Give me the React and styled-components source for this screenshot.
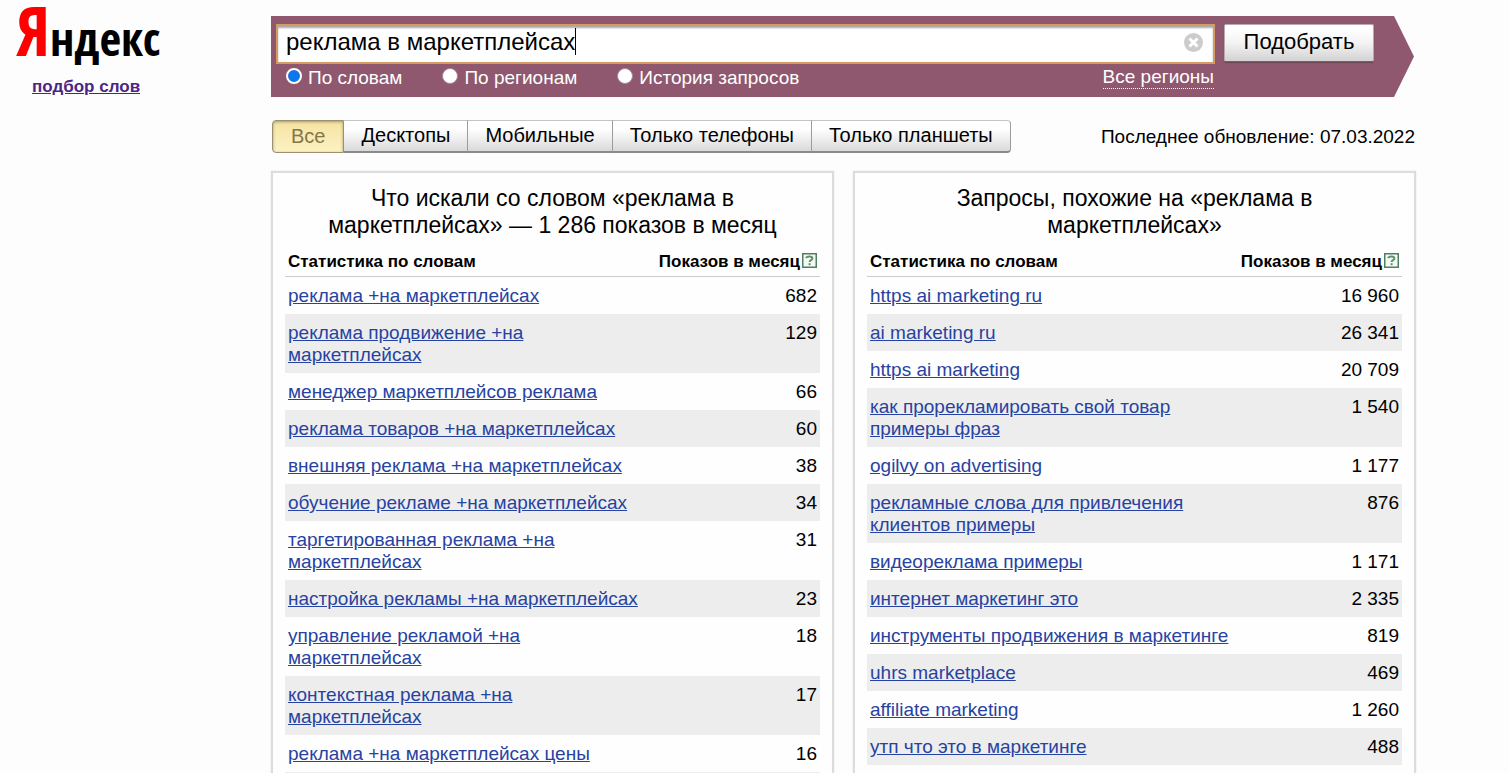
import { useState } from "react";
import styled, { createGlobalStyle } from "styled-components";

const GlobalStyle = createGlobalStyle`
  * {
    box-sizing: border-box;
  }
  body {
    margin: 0;
    background-color: #fdfdfd;
    color: #000000;
    font-family: "Liberation Sans", Arial, sans-serif;
    font-size: 19px;
    line-height: 22px;
  }
  input,
  button {
    font-family: inherit;
  }
`;

const Page = styled.div`
  display: grid;
  grid-template-columns: 271px minmax(0, 1fr);
  padding-right: 93px;
  height: 100vh;
  overflow: hidden;
`;

const Sidebar = styled.aside`
  display: flex;
  flex-direction: column;
  align-items: flex-start;
  padding-left: 16px;
`;

const Logo = styled.a`
  font-family: "Open Sans Condensed", "DejaVu Sans Condensed", "Liberation Sans", sans-serif;
  font-size: 47px;
  line-height: 60px;
  color: #000000;
  text-decoration: none;
`;

const LogoInitial = styled.span`
  font-size: 68px;
  color: #ff0000;
`;

const ServiceLink = styled.a`
  margin: 8px 0 0 16px;
  font-size: 17px;
  font-weight: bold;
  color: #4b2585;
`;

const Main = styled.main`
  padding-top: 16px;
`;

const SearchForm = styled.form`
  display: grid;
  grid-template-columns: minmax(0, 1fr) 150px;
  column-gap: 9px;
  align-items: start;
  height: 81px;
  margin-right: 2px;
  padding: 8px 40px 0 5px;
  background-color: #8f586f;
  clip-path: polygon(0 0, calc(100% - 20px) 0, 100% 50%, calc(100% - 20px) 100%, 0 100%);
`;

const InputBox = styled.div`
  position: relative;
`;

const SearchInput = styled.input`
  display: block;
  width: 100%;
  height: 40px;
  padding: 0 44px 4px 8px;
  border: 2px solid #d49c62;
  border-radius: 0;
  background-color: #ffffff;
  box-shadow: inset 0 2px 2px #aaaaaa;
  font-size: 24px;
  color: #000000;
  outline: none;
`;

const Caret = styled.span`
  position: absolute;
  top: 4px;
  left: 299px;
  width: 1px;
  height: 27px;
  background-color: #000000;
`;

const ClearButton = styled.button`
  position: absolute;
  top: 9px;
  right: 12px;
  width: 19px;
  height: 19px;
  padding: 0;
  border: 0;
  background: none;
  svg {
    display: block;
  }
`;

const SubmitButton = styled.button`
  height: 38px;
  padding: 0 0 2px;
  border: 1px solid #b9a9b1;
  border-bottom-color: #77606b;
  border-radius: 2px;
  background: linear-gradient(#ffffff 10%, #f3f3f3 50%, #d2d2d2);
  box-shadow: 0 1px 1px #6b4556;
  font-size: 22px;
  color: #000000;
`;

const Options = styled.div`
  display: flex;
  align-items: center;
  gap: 40px;
  padding: 2px 1px 0 10px;
  color: #ffffff;
`;

const Option = styled.label`
  display: flex;
  align-items: center;
  gap: 6px;
`;

const Radio = styled.input`
  appearance: none;
  width: 16px;
  height: 16px;
  margin: 0 0 4px;
  border: 1px solid #aa8c99;
  border-radius: 50%;
  background-color: #ffffff;
  &:checked {
    border: 2px solid #ffffff;
    background-color: #0b78ee;
    background-clip: padding-box;
  }
`;

const RegionsLink = styled.a`
  margin-left: auto;
  border-bottom: 1px dotted #ffffff;
  color: #ffffff;
  line-height: 22px;
  text-decoration: none;
`;

const Toolbar = styled.div`
  display: flex;
  justify-content: space-between;
  align-items: center;
  margin-top: 23px;
  padding: 0 1px;
`;

const Tabs = styled.div`
  display: flex;
`;

const Tab = styled.button`
  height: 33px;
  padding: 0 17px 2px;
  border: 1px solid #c4c4c4;
  border-left-width: 0;
  border-right-color: #9c9c9c;
  border-bottom: 2px solid #8a8a8a;
  background: linear-gradient(#ffffff 25%, #f1f1f1 55%, #d9d9d9);
  font-size: 20px;
  color: #000000;
  &:last-child {
    border-radius: 0 4px 4px 0;
  }
  ${({ $active }) =>
    $active &&
    `
    padding: 0 18px;
    border: 1px solid #9b9070;
    border-radius: 4px 0 0 4px;
    background: linear-gradient(#f5e3a1, #fdf2c4);
    box-shadow: inset 0 1px 3px #a59a70;
    color: #85754a;
  `}
`;

const Columns = styled.div`
  display: grid;
  grid-template-columns: 1fr 1fr;
  gap: 19px;
  margin-top: 18px;
`;

const Panel = styled.section`
  padding: 12px 12px 0;
  border: 2px solid #dcdcdc;
  background-color: #fefefe;
  box-shadow: 0 0 1px #cccccc;
`;

const PanelTitle = styled.h2`
  margin: 0;
  padding: 0 36px;
  font-size: 23px;
  font-weight: normal;
  line-height: 27px;
  text-align: center;
`;

const Table = styled.table`
  width: 100%;
  margin-top: 7px;
  border-collapse: collapse;
  table-layout: fixed;
`;

const HeadCell = styled.th`
  width: ${({ $count }) => ($count ? "168px" : "auto")};
  padding: 5px 3px 3px;
  border-bottom: 1px solid #cccccc;
  font-size: 17px;
  text-align: ${({ $count }) => ($count ? "right" : "left")};
  white-space: nowrap;
`;

const HelpLink = styled.a`
  display: inline-block;
  margin-left: 2px;
  vertical-align: -1px;
  svg {
    display: block;
  }
`;

const Row = styled.tr`
  &:nth-child(even) {
    background-color: #ededed;
  }
`;

const Cell = styled.td`
  padding: 8px 3px 7px;
  vertical-align: top;
  text-align: ${({ $count }) => ($count ? "right" : "left")};
`;

const QueryLink = styled.a`
  color: #2743a2;
`;

const modes = ["По словам", "По регионам", "История запросов"];

const devices = ["Все", "Десктопы", "Мобильные", "Только телефоны", "Только планшеты"];

const phraseRows = [
  ["реклама +на маркетплейсах", "682"],
  ["реклама продвижение +на маркетплейсах", "129"],
  ["менеджер маркетплейсов реклама", "66"],
  ["реклама товаров +на маркетплейсах", "60"],
  ["внешняя реклама +на маркетплейсах", "38"],
  ["обучение рекламе +на маркетплейсах", "34"],
  ["таргетированная реклама +на маркетплейсах", "31"],
  ["настройка рекламы +на маркетплейсах", "23"],
  ["управление рекламой +на маркетплейсах", "18"],
  ["контекстная реклама +на маркетплейсах", "17"],
  ["реклама +на маркетплейсах цены", "16"],
];

const similarRows = [
  ["https ai marketing ru", "16 960"],
  ["ai marketing ru", "26 341"],
  ["https ai marketing", "20 709"],
  ["как прорекламировать свой товар примеры фраз", "1 540"],
  ["ogilvy on advertising", "1 177"],
  ["рекламные слова для привлечения клиентов примеры", "876"],
  ["видеореклама примеры", "1 171"],
  ["интернет маркетинг это", "2 335"],
  ["инструменты продвижения в маркетинге", "819"],
  ["uhrs marketplace", "469"],
  ["affiliate marketing", "1 260"],
  ["утп что это в маркетинге", "488"],
];

const ClearIcon = () => (
  <svg width="19" height="19" viewBox="0 0 19 19" aria-hidden="true">
    <circle cx="9.5" cy="9.5" r="9.5" fill="#cccccc" />
    <path d="M5.5 5.5l8 8M13.5 5.5l-8 8" stroke="#ffffff" strokeWidth="3" />
  </svg>
);

const HelpIcon = () => (
  <svg width="15" height="15" viewBox="0 0 15 15" aria-hidden="true">
    <rect x="0.75" y="0.75" width="13.5" height="13.5" fill="#f4faf4" stroke="#4f8060" strokeWidth="1.5" />
    <path
      d="M4.2 5.2C4.4 3.9 5.6 3.4 7.4 3.4c1.900 0 3 .7 3 1.900 0 1.900-2.800 1.600-2.800 3.700"
      fill="none"
      stroke="#5f9070"
      strokeWidth="2"
    />
    <rect x="6.600" y="10.200" width="2" height="2" fill="#5f9070" />
  </svg>
);

const QueryPanel = ({ title, rows }) => (
  <Panel>
    <PanelTitle>{title}</PanelTitle>
    <Table>
      <thead>
        <tr>
          <HeadCell>Статистика по словам</HeadCell>
          <HeadCell $count>
            Показов в месяц
            <HelpLink href="#help" aria-label="Справка">
              <HelpIcon />
            </HelpLink>
          </HeadCell>
        </tr>
      </thead>
      <tbody>
        {rows.map(([query, count]) => (
          <Row key={query}>
            <Cell>
              <QueryLink href="#query">{query}</QueryLink>
            </Cell>
            <Cell $count>{count}</Cell>
          </Row>
        ))}
        <Row>
          <Cell colSpan={2} />
        </Row>
      </tbody>
    </Table>
  </Panel>
);

const App = () => {
  const [query, setQuery] = useState("реклама в маркетплейсах");
  const [mode, setMode] = useState(modes[0]);
  const [device, setDevice] = useState(devices[0]);

  return (
    <>
      <GlobalStyle />
      <Page>
        <Sidebar>
          <Logo href="#home">
            <LogoInitial>Я</LogoInitial>ндекс
          </Logo>
          <ServiceLink href="#wordstat">подбор слов</ServiceLink>
        </Sidebar>
        <Main>
          <SearchForm onSubmit={(e) => e.preventDefault()}>
            <div>
              <InputBox>
                <SearchInput
                  type="text"
                  aria-label="Запрос"
                  value={query}
                  onChange={(e) => setQuery(e.target.value)}
                />
                <Caret />
                <ClearButton type="button" aria-label="Очистить" onClick={() => setQuery("")}>
                  <ClearIcon />
                </ClearButton>
              </InputBox>
              <Options>
                {modes.map((name) => (
                  <Option key={name}>
                    <Radio
                      type="radio"
                      name="mode"
                      checked={mode === name}
                      onChange={() => setMode(name)}
                    />
                    {name}
                  </Option>
                ))}
                <RegionsLink href="#regions">Все регионы</RegionsLink>
              </Options>
            </div>
            <SubmitButton type="submit">Подобрать</SubmitButton>
          </SearchForm>
          <Toolbar>
            <Tabs>
              {devices.map((name) => (
                <Tab
                  key={name}
                  type="button"
                  $active={device === name}
                  onClick={() => setDevice(name)}
                >
                  {name}
                </Tab>
              ))}
            </Tabs>
            <span>Последнее обновление: 07.03.2022</span>
          </Toolbar>
          <Columns>
            <QueryPanel
              title="Что искали со словом «реклама в маркетплейсах» — 1 286 показов в месяц"
              rows={phraseRows}
            />
            <QueryPanel title="Запросы, похожие на «реклама в маркетплейсах»" rows={similarRows} />
          </Columns>
        </Main>
      </Page>
    </>
  );
};

export default App;
